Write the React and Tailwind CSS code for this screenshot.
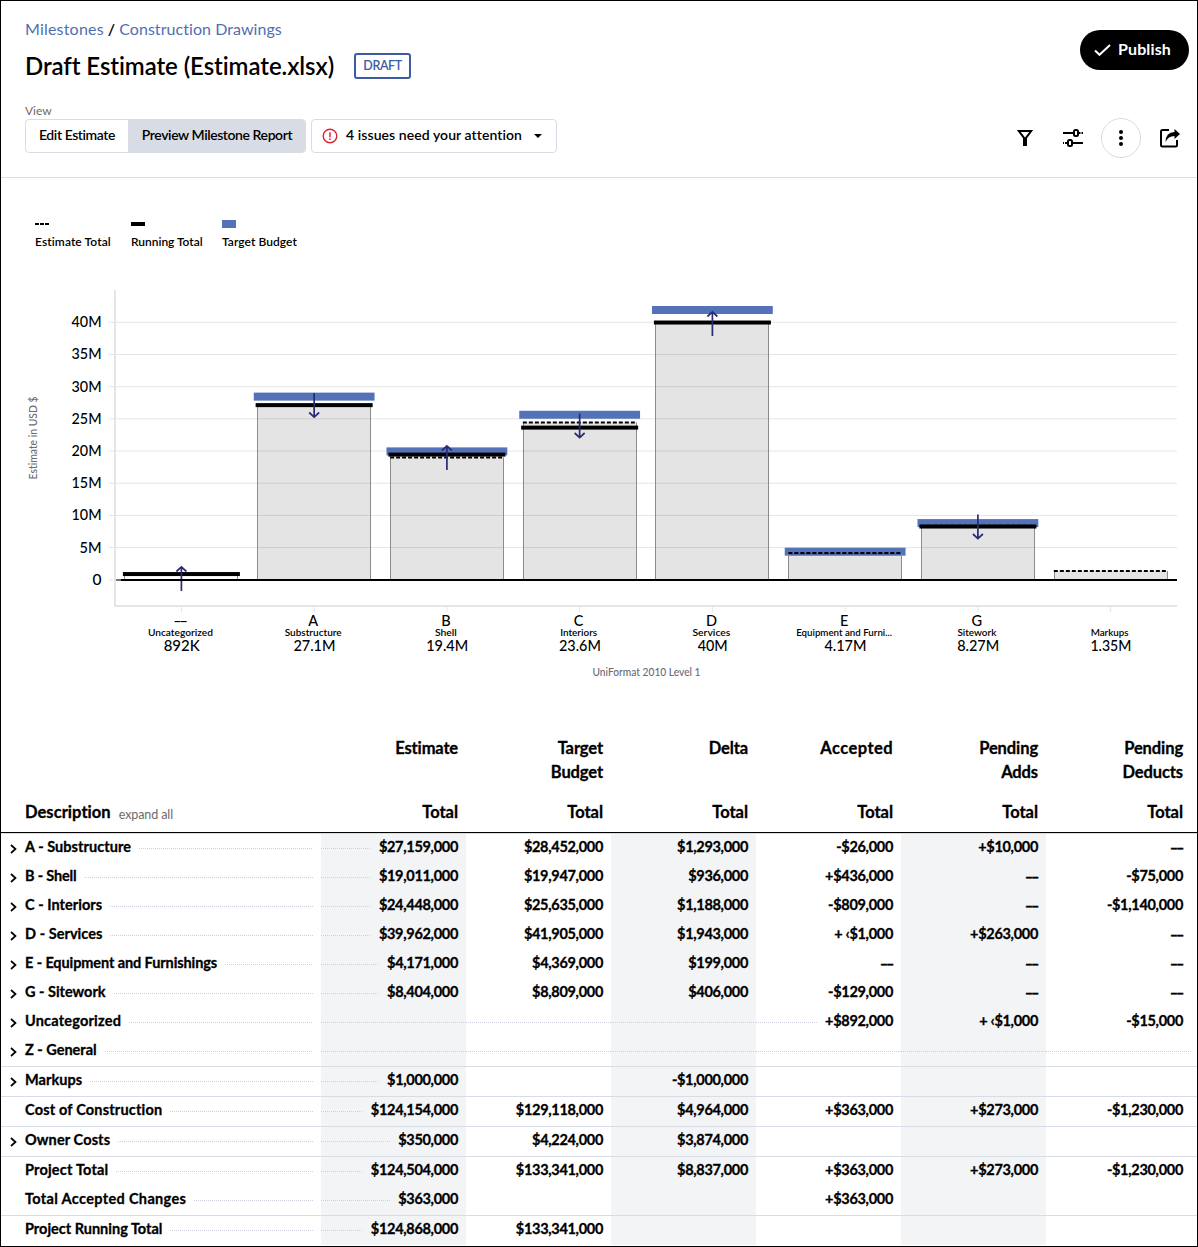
import React from "react";

const INK = "#000";
const BLUE = "#5472b8";
const NAVY = "#2b2b75";

const bars = [
  { code: "––", name: "Uncategorized", w: 65, total: "892K", tw: 36, running: 0.892, arrow: [591, 565.5] },
  { code: "A", name: "Substructure", w: 57, total: "27.1M", tw: 42, estimate: 27.159, target: 28.452, running: 27.133, arrow: [393, 418.5] },
  { code: "B", name: "Shell", w: 22, total: "19.4M", tw: 42, estimate: 19.011, target: 19.947, running: 19.447, arrow: [470, 444.5] },
  { code: "C", name: "Interiors", w: 37, total: "23.6M", tw: 42, estimate: 24.448, target: 25.635, running: 23.639, arrow: [413.5, 439] },
  { code: "D", name: "Services", w: 38, total: "40M", tw: 30, estimate: 39.962, target: 41.905, running: 39.962, arrow: [336, 310.5] },
  { code: "E", name: "Equipment and Furni...", w: 96, total: "4.17M", tw: 42, estimate: 4.171, target: 4.369 },
  { code: "G", name: "Sitework", w: 39, total: "8.27M", tw: 42, estimate: 8.404, target: 8.809, running: 8.275, arrow: [514.5, 540] },
  { code: "", name: "Markups", w: 38, total: "1.35M", tw: 41, estimate: 1.35 },
];

const yOf = (v) => 579.8 - v * 6.438;

function Chart() {
  return (
    <svg width="1180" height="410" viewBox="1 280 1180 410" className="block font-[Lato] font-medium">
      {[5, 10, 15, 20, 25, 30, 35, 40].map((v) => (
        <rect key={v} x="109" y={yOf(v) - 0.5} width="1068" height="1" fill="#e5e5e7" />
      ))}
      <rect x="109" y={579.3} width="6" height="1" fill="#e5e5e7" />
      {[0, 5, 10, 15, 20, 25, 30, 35, 40].map((v) => (
        <text key={v} x="101.5" y={yOf(v) + 5} textAnchor="end" fontSize="15" fill={INK}
          textLength={v === 0 ? 9 : v === 5 ? 22 : 30} lengthAdjust="spacingAndGlyphs">
          {v === 0 ? "0" : `${v}M`}
        </text>
      ))}
      <rect x="114" y="290" width="2" height="317" fill="#e5e5e7" />
      <rect x="114" y="605" width="1063" height="2" fill="#e5e5e7" />
      <text transform="rotate(-90 37 438)" x="37" y="438" textAnchor="middle" fontSize="11" fill="#6b6b76"
        textLength="83" lengthAdjust="spacingAndGlyphs">
        Estimate in USD $
      </text>

      {bars.map((b, i) => {
        const cx = 181.4 + i * 132.75;
        const up = b.arrow && b.arrow[1] < b.arrow[0];
        const d = up ? 1 : -1;
        return (
          <g key={b.name}>
            {b.target && <rect x={cx - 60.4} y={yOf(b.target) - 4} width="120.8" height="8" fill={BLUE} />}
            {b.estimate ? (
              <rect x={cx - 56.8} y={yOf(b.estimate)} width="113.6" height={b.estimate * 6.438} fill="#000" fillOpacity="0.105" />
            ) : null}
            <path d={`M${Math.round(cx - 57) + 0.5} ${yOf(b.estimate || b.running)}V579M${Math.round(cx + 56) + 0.5} ${yOf(b.estimate || b.running)}V579`}
              stroke="#8c8c8c" strokeWidth="1" />
            {b.estimate && (
              <path d={`M${cx - 56.8} ${yOf(b.estimate)}h113.2`} stroke={INK} strokeWidth="2" strokeDasharray="4 2" />
            )}
            {b.running && <rect x={cx - 58.5} y={yOf(b.running) - 2} width="117" height="4" fill={INK} />}
            {b.arrow && (
              <path
                d={`M${cx} ${b.arrow[0]}V${b.arrow[1] + d}M${cx - 5} ${b.arrow[1] + d * 6}L${cx} ${b.arrow[1] + d * 1.4}L${cx + 5} ${b.arrow[1] + d * 6}`}
                fill="none" stroke={NAVY} strokeWidth="1.7" />
            )}
            <rect x={cx - 0.5} y="607" width="1" height="5" fill="#e5e5e7" />
            <text x={i ? cx - 1 : cx - 2} y="626.4" textAnchor="middle" fontSize="14.5" fill={INK} letterSpacing={i ? 0 : -2.2}>{b.code}</text>
            <text x={cx - 1} y="636" textAnchor="middle" fontSize="10" fontWeight="600" fill={INK} textLength={b.w} lengthAdjust="spacingAndGlyphs">{b.name}</text>
            <text x={cx + 0.3} y="651" textAnchor="middle" fontSize="15" fill={INK} textLength={b.tw} lengthAdjust="spacingAndGlyphs">{b.total}</text>
          </g>
        );
      })}
      <rect x="116" y="579" width="6" height="2" fill="#777" />
      <rect x="121" y="579" width="1056" height="2" fill={INK} />
      <text x="646.5" y="676" textAnchor="middle" fontSize="11" fill="#6b6b76" textLength="108" lengthAdjust="spacingAndGlyphs">
        UniFormat 2010 Level 1
      </text>
    </svg>
  );
}

const columns = [
  ["Estimate"],
  ["Target", "Budget"],
  ["Delta"],
  ["Accepted"],
  ["Pending", "Adds"],
  ["Pending", "Deducts"],
];

const rows = [
  { label: "A - Substructure", track: "tracking-[0.05px]", chev: true, v: ["$27,159,000", "$28,452,000", "$1,293,000", "-$26,000", "+$10,000", "––"] },
  { label: "B - Shell", track: "tracking-[-0.18px]", chev: true, v: ["$19,011,000", "$19,947,000", "$936,000", "+$436,000", "––", "-$75,000"] },
  { label: "C - Interiors", track: "tracking-[0.05px]", chev: true, v: ["$24,448,000", "$25,635,000", "$1,188,000", "-$809,000", "––", "-$1,140,000"] },
  { label: "D - Services", track: "tracking-[0.05px]", chev: true, v: ["$39,962,000", "$41,905,000", "$1,943,000", "+ ‹$1,000", "+$263,000", "––"] },
  { label: "E - Equipment and Furnishings", track: "tracking-[-0.1px]", chev: true, v: ["$4,171,000", "$4,369,000", "$199,000", "––", "––", "––"] },
  { label: "G - Sitework", track: "tracking-[0px]", chev: true, v: ["$8,404,000", "$8,809,000", "$406,000", "-$129,000", "––", "––"] },
  { label: "Uncategorized", track: "tracking-[0.2px]", chev: true, v: ["", "", "", "+$892,000", "+ ‹$1,000", "-$15,000"] },
  { label: "Z - General", track: "tracking-[0px]", chev: true, v: ["", "", "", "", "", ""] },
  { label: "Markups", track: "tracking-[0.05px]", chev: true, line: true, v: ["$1,000,000", "", "-$1,000,000", "", "", ""] },
  { label: "Cost of Construction", track: "tracking-[0.19px]", line: true, v: ["$124,154,000", "$129,118,000", "$4,964,000", "+$363,000", "+$273,000", "-$1,230,000"] },
  { label: "Owner Costs", track: "tracking-[0.12px]", chev: true, line: true, v: ["$350,000", "$4,224,000", "$3,874,000", "", "", ""] },
  { label: "Project Total", track: "tracking-[0.2px]", line: true, v: ["$124,504,000", "$133,341,000", "$8,837,000", "+$363,000", "+$273,000", "-$1,230,000"] },
  { label: "Total Accepted Changes", track: "tracking-[0.34px]", v: ["$363,000", "", "", "+$363,000", "", ""] },
  { label: "Project Running Total", track: "tracking-[0px]", line: true, v: ["$124,868,000", "$133,341,000", "", "", "", ""] },
];

const dots = "h-px bg-[repeating-linear-gradient(90deg,#cdd1de_0_1px,transparent_1px_2px)]";

function Row({ row }) {
  const first = row.v.findIndex((x) => x !== "");
  const firstValue = first === -1 ? 6 : first;
  return (
    <div className="relative flex h-[29px] text-[14.5px] font-bold leading-[29px]">
      <div className="flex w-[320px] pr-2">
        <span className="flex w-6 items-center pl-2">
          {row.chev && (
            <svg width="8" height="10" viewBox="0 0 8 10" className="block">
              <path d="M2 1L6.500 5L2 9" fill="none" stroke="#000" strokeWidth="1.7" />
            </svg>
          )}
        </span>
        <span className={`-mt-[2px] ${row.track}`}>{row.label}</span>
        <span className={`ml-2 mt-[14px] flex-1 ${dots}`} />
      </div>
      {row.v.map((v, i) => (
        <div key={i} className={`flex w-[145px] ${v ? "pr-2" : ""}`}>
          {i <= firstValue ? <span className={`mt-[14px] flex-1 ${dots} ${v ? "mr-2" : ""}`} /> : <span className="flex-1" />}
          <span className={v === "––" ? "-mt-px mr-px tracking-[-2.3px]" : "-mt-[2px] tracking-[-0.31px]"}>{v}</span>
        </div>
      ))}
      {row.line && <div className="absolute -top-px left-0 h-px w-full bg-[#d8dce6]" />}
    </div>
  );
}

function Table() {
  return (
    <div className="[-webkit-text-stroke:0.3px_black]">
      <div className="flex h-[96px] text-[16.5px] font-bold leading-6">
        <div className="flex w-[320px] items-end pl-6">
          <span className="mb-2 tracking-[0.05px]">Description</span>
          <span className="mb-[5px] ml-2 text-[12.5px] font-normal tracking-[-0.1px] text-[#6b6b6b] [-webkit-text-stroke:0]">expand all</span>
        </div>
        {columns.map((c, i) => (
          <div key={i} className="flex w-[145px] flex-col items-end pr-2 tracking-[-0.02px]">
            <div className={i === 0 ? "h-16 tracking-[-0.15px]" : "h-16 tracking-[-0.1px]"}>
              {c.map((line) => (
                <div key={line} className={line === "Accepted" ? "text-right tracking-[0.45px]" : "text-right"}>{line}</div>
              ))}
            </div>
            <span>Total</span>
          </div>
        ))}
      </div>
      <div className="border-t border-black">
        <div className="border-t border-[#d8dce6] bg-[linear-gradient(90deg,transparent_320px,#f3f4f6_320px_465px,transparent_465px_610px,#f3f4f6_610px_755px,transparent_755px_900px,#f3f4f6_900px_1045px,transparent_1045px)]">
          {rows.map((r) => (
            <div key={r.label} className={r.line ? "pt-px" : ""}>
              <Row row={r} />
            </div>
          ))}
        </div>
      </div>
    </div>
  );
}

function Header() {
  return (
    <header className="flex h-[177px] justify-between border-b border-[#dcdde2] pl-6 pr-2">
      <div>
        <div className="mt-[16px] text-[16px] leading-6">
          <span className="tracking-[0.2px] text-[#4f6fb0]">Milestones</span>
          <span className="mx-1 font-semibold">/</span>
          <span className="tracking-[0.06px] text-[#4f6fb0]">Construction Drawings</span>
        </div>
        <div className="mt-[9px] flex items-center">
          <h1 className="text-[24px] font-semibold leading-[32px] tracking-[-0.08px]">Draft Estimate (Estimate.xlsx)</h1>
          <span className="ml-5 flex h-[26px] w-[57px] items-center justify-center rounded-[3px] border-2 border-[#3d5ca3] pt-px text-[12.5px] font-semibold tracking-[-0.4px] text-[#3d5ca3]">DRAFT</span>
        </div>
        <div className="mt-[21px] text-[12px] leading-4 text-[#6b6b6b]">View</div>
        <div className="flex h-[34px]">
          <div className="flex w-[281px] overflow-hidden rounded-[4px] border border-[#d8dce4] text-[14px] font-semibold leading-[30px]">
            <span className="w-[103px] border-r border-[#d8dce4] text-center tracking-[-0.42px]">Edit Estimate</span>
            <span className="flex-1 bg-[#d8dce4] text-center tracking-[-0.42px]">Preview Milestone Report</span>
          </div>
          <div className="ml-[5px] flex w-[246px] items-center rounded-[4px] border border-[#d8dce4] pl-[10px] text-[14px] font-semibold">
            <svg width="16" height="16" viewBox="0 0 16 16">
              <circle cx="8" cy="8" r="6.8" fill="none" stroke="#dc2430" strokeWidth="1.4" />
              <path d="M8 4.2v5M8 10.4v1.5" stroke="#dc2430" strokeWidth="1.5" />
            </svg>
            <span className="-mt-[3px] ml-2 tracking-[0.07px]">4 issues need your attention</span>
            <svg width="8" height="4" viewBox="0 0 8 4" className="ml-3"><path d="M0 0h8L4 4z" /></svg>
          </div>
        </div>
      </div>
      <div className="flex flex-col items-end">
        <button className="mt-[29px] flex h-10 w-[109px] items-center rounded-full bg-black pl-[14px] text-[16px] font-bold tracking-[0.13px] text-white">
          <svg width="17" height="12" viewBox="0 0 17 12"><path d="M1 6.5L5.5 10.8L16 1" fill="none" stroke="#fff" strokeWidth="2" /></svg>
          <span className="-mt-[2px] ml-[7px]">Publish</span>
        </button>
        <div className="mr-[9px] mt-[48px] flex h-10 items-center">
          <svg width="16" height="16" viewBox="0 0 16 16"><path d="M1.8 1h12.4L9 7.8V15H7V7.8z" fill="none" stroke="#000" strokeWidth="2" /></svg>
          <svg width="20" height="18" viewBox="0 0 20 18" className="ml-[30px]">
            <path d="M0 4h10M16 4h1.5M18.5 4h1.5M0 14h1M2 14h2M10 14h10" stroke="#000" strokeWidth="2" />
            <rect x="11" y="1" width="4" height="6" rx="1.5" fill="none" stroke="#000" strokeWidth="2" />
            <rect x="5" y="11" width="4" height="6" rx="1.5" fill="none" stroke="#000" strokeWidth="2" />
          </svg>
          <span className="ml-[18px] flex size-10 items-center justify-center rounded-full border border-[#d8dce4]">
            <svg width="4" height="16" viewBox="0 0 4 16"><circle cx="2" cy="2" r="2" /><circle cx="2" cy="8" r="2" /><circle cx="2" cy="14" r="2" /></svg>
          </span>
          <svg width="20" height="20" viewBox="0 0 20 20" className="ml-[19px]">
            <path d="M9 2H2.5Q1 2 1 3.5V17Q1 18.5 2.5 18.5H15.5Q17 18.5 17 17V12" fill="none" stroke="#000" strokeWidth="2" />
            <path d="M14.5 1L20 6L14.5 11V8Q8 8 5.5 14Q5.5 4.5 14.5 4z" />
          </svg>
        </div>
      </div>
    </header>
  );
}

export default function App() {
  return (
    <div className="h-[1247px] w-[1198px] overflow-hidden border border-black bg-white font-[Lato,sans-serif] text-black [font-variant-ligatures:none]">
      <Header />
      <div className="flex h-[102px] gap-5 pl-[34px] pt-[42px] text-[12px] font-semibold leading-4">
        <div>
          <div className="flex h-2 items-center gap-px"><i className="h-[2px] w-1 bg-black" /><i className="h-[2px] w-1 bg-black" /><i className="h-[2px] w-1 bg-black" /></div>
          <div className="mt-[6px] w-[76px] whitespace-nowrap tracking-[0.1px]">Estimate Total</div>
        </div>
        <div>
          <div className="flex h-2 items-center"><i className="h-1 w-[14px] bg-black" /></div>
          <div className="mt-[6px] w-[71px] whitespace-nowrap tracking-[-0.03px]">Running Total</div>
        </div>
        <div>
          <div className="h-2 w-[14px] bg-[#5472b8]" />
          <div className="mt-[6px] whitespace-nowrap tracking-[0.06px]">Target Budget</div>
        </div>
      </div>
      <Chart />
      <div className="mt-[46px]">
        <Table />
      </div>
    </div>
  );
}
